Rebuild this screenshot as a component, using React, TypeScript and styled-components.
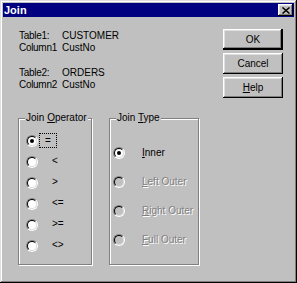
import React from "react";
import styled, { createGlobalStyle } from "styled-components";

const Global = createGlobalStyle`
  html, body { margin: 0; padding: 0; background: #c0c0c0; }
  body { font-family: "Liberation Sans", Arial, sans-serif; }
`;

const Window = styled.div`
  width: 297px;
  height: 283px;
  box-sizing: border-box;
  padding: 3px;
  background: #c0c0c0;
  display: flex;
  flex-direction: column;
  box-shadow: inset -1px -1px #000, inset 1px 1px #dfdfdf, inset -2px -2px #808080, inset 2px 2px #fff;
  font-size: 10px;
  color: #000;
`;

const TitleBar = styled.div`
  height: 14px;
  background: #000080;
  display: flex;
  align-items: flex-start;
  justify-content: space-between;
  flex: none;
`;

const Title = styled.span`
  color: #fff;
  font-weight: bold;
  font-size: 11px;
  line-height: 14px;
  padding-left: 1px;
`;

const CloseButton = styled.div`
  width: 15px;
  height: 12px;
  margin: 1px 1px 0 0;
  box-sizing: border-box;
  background: #c0c0c0;
  box-shadow: inset -1px -1px #000, inset 1px 1px #fff, inset -2px -2px #808080, inset 2px 2px #dfdfdf;
  display: flex;
  align-items: center;
  justify-content: center;
`;

const Body = styled.div`
  display: flex;
  flex: 1;
`;

const LeftCol = styled.div`
  flex: 1;
  display: flex;
  flex-direction: column;
`;

const InfoBlock = styled.div<{ $top: number }>`
  display: grid;
  grid-template-columns: 43px auto;
  grid-auto-rows: 12px;
  line-height: 12px;
  margin: ${(p) => p.$top}px 0 0 16px;
`;

const InfoLabel = styled.span`
  letter-spacing: -0.3px;
  white-space: nowrap;
`;

const InfoValue = styled.span`
  white-space: nowrap;
`;

const GroupRow = styled.div`
  display: flex;
  gap: 17px;
  margin: 27px 0 0 15px;
`;

const GroupBox = styled.div<{ $width: number; $padTop: number; $padLeft: number; $rowH: number }>`
  position: relative;
  width: ${(p) => p.$width}px;
  height: 147px;
  box-sizing: border-box;
  border: 1px solid #808080;
  box-shadow: inset 1px 1px #fff, 1px 1px #fff;
  padding: ${(p) => p.$padTop}px 0 0 ${(p) => p.$padLeft}px;
  display: grid;
  grid-auto-rows: ${(p) => p.$rowH}px;
  align-content: start;
`;

const GroupLabel = styled.span`
  position: absolute;
  top: -7px;
  left: 6px;
  padding: 0 1px;
  background: #c0c0c0;
  line-height: 12px;
  white-space: nowrap;
`;

const Row = styled.div`
  display: flex;
  align-items: center;
`;

const RadioOuter = styled.span`
  width: 12px;
  height: 12px;
  box-sizing: border-box;
  border-radius: 50%;
  border: 1px solid;
  border-color: #808080 #fff #fff #808080;
  display: flex;
  align-items: center;
  justify-content: center;
  flex: none;
`;

const RadioInner = styled.span<{ $disabled?: boolean }>`
  width: 10px;
  height: 10px;
  box-sizing: border-box;
  border-radius: 50%;
  border: 1px solid;
  border-color: #000 #dfdfdf #dfdfdf #000;
  background: ${(p) => (p.$disabled ? "#c0c0c0" : "#fff")};
  display: flex;
  align-items: center;
  justify-content: center;
`;

const Dot = styled.span`
  width: 4px;
  height: 4px;
  border-radius: 50%;
  background: #000;
`;

const OpLabel = styled.span<{ $focused?: boolean }>`
  margin-left: 1px;
  height: 15px;
  box-sizing: border-box;
  line-height: 13px;
  white-space: nowrap;
  ${(p) =>
    p.$focused
      ? `width: 18px; border: 1px dotted #000; text-align: center;`
      : `padding-left: 13px;`}
`;

const TypeLabel = styled.span<{ $disabled?: boolean }>`
  margin-left: 17px;
  line-height: 12px;
  white-space: nowrap;
  color: ${(p) => (p.$disabled ? "#808080" : "#000")};
  text-shadow: ${(p) => (p.$disabled ? "1px 1px #fff" : "none")};
`;

const ButtonCol = styled.div`
  width: 60px;
  margin: 12px 11px 0 0;
  display: flex;
  flex-direction: column;
  gap: 3px;
`;

const Button = styled.div<{ $default?: boolean }>`
  height: 21px;
  box-sizing: border-box;
  display: flex;
  align-items: center;
  justify-content: center;
  line-height: 12px;
  box-shadow: ${(p) =>
    p.$default
      ? "inset -2px -2px #000, inset 1px 1px #fff, inset -3px -3px #808080, inset 2px 2px #dfdfdf"
      : "inset -1px -1px #000, inset 1px 1px #fff, inset -2px -2px #808080, inset 2px 2px #dfdfdf"};
`;

const U = styled.span`
  text-decoration: underline;
`;

function Radio({ checked, disabled }: { checked?: boolean; disabled?: boolean }) {
  return (
    <RadioOuter>
      <RadioInner $disabled={disabled}>{checked && <Dot />}</RadioInner>
    </RadioOuter>
  );
}

const operators = ["=", "<", ">", "<=", ">=", "<>"];

const types: { first: string; rest: string; disabled: boolean; checked: boolean }[] = [
  { first: "I", rest: "nner", disabled: false, checked: true },
  { first: "L", rest: "eft Outer", disabled: true, checked: false },
  { first: "R", rest: "ight Outer", disabled: true, checked: false },
  { first: "F", rest: "ull Outer", disabled: true, checked: false },
];

export default function App() {
  return (
    <>
      <Global />
      <Window>
        <TitleBar>
          <Title>Join</Title>
          <CloseButton>
            <svg width="8" height="7" viewBox="0 0 8 7">
              <path d="M0.5 0.5 L7.5 6.5 M7.5 0.5 L0.5 6.5" stroke="#000" strokeWidth="1.5" />
            </svg>
          </CloseButton>
        </TitleBar>
        <Body>
          <LeftCol>
            <InfoBlock $top={13}>
              <InfoLabel>Table1:</InfoLabel>
              <InfoValue>CUSTOMER</InfoValue>
              <InfoLabel>Column1</InfoLabel>
              <InfoValue>CustNo</InfoValue>
            </InfoBlock>
            <InfoBlock $top={13}>
              <InfoLabel>Table2:</InfoLabel>
              <InfoValue>ORDERS</InfoValue>
              <InfoLabel>Column2</InfoLabel>
              <InfoValue>CustNo</InfoValue>
            </InfoBlock>
            <GroupRow>
              <GroupBox $width={74} $padTop={11} $padLeft={7} $rowH={21}>
                <GroupLabel>
                  Join <U>O</U>perator
                </GroupLabel>
                {operators.map((op, i) => (
                  <Row key={op}>
                    <Radio checked={i === 0} />
                    <OpLabel $focused={i === 0}>{op}</OpLabel>
                  </Row>
                ))}
              </GroupBox>
              <GroupBox $width={90} $padTop={19} $padLeft={3} $rowH={29}>
                <GroupLabel>
                  Join <U>T</U>ype
                </GroupLabel>
                {types.map((t) => (
                  <Row key={t.rest}>
                    <Radio checked={t.checked} disabled={t.disabled} />
                    <TypeLabel $disabled={t.disabled}>
                      <U>{t.first}</U>
                      {t.rest}
                    </TypeLabel>
                  </Row>
                ))}
              </GroupBox>
            </GroupRow>
          </LeftCol>
          <ButtonCol>
            <Button $default>OK</Button>
            <Button>Cancel</Button>
            <Button>
              <span>
                <U>H</U>elp
              </span>
            </Button>
          </ButtonCol>
        </Body>
      </Window>
    </>
  );
}
